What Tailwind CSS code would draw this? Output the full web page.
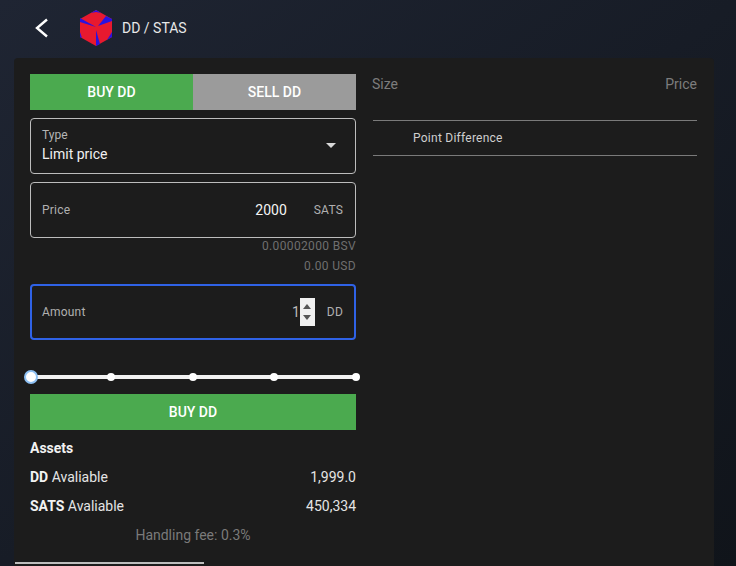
<!DOCTYPE html>
<html>
<head>
<meta charset="utf-8">
<script src="https://cdn.jsdelivr.net/npm/@tailwindcss/browser@4"></script>
</head>
<body class="m-0 h-[566px] w-[736px] overflow-hidden bg-gradient-to-br from-[#1f2533] via-[#171c26] to-[#10141a] font-['Roboto',sans-serif] text-white">
  <header class="flex h-[58px] items-center pb-[2px]">
    <svg class="ml-[34px] h-[20px] w-[16px]" viewBox="0 0 16 20" fill="none"><path d="M13 1.5 L3 10 L13 18.5" stroke="#fff" stroke-width="2.4"/></svg>
    <svg class="ml-[30px] h-[36px] w-[32px]" viewBox="0 0 32 36">
      <path d="M16 0 L32 9 V27 L16 36 L0 27 V9 Z" fill="#e8192f"/>
      <path d="M11 3 L16 0 L21 3 L16 2 Z M0 8 L16 17 L0 12 Z M26 6 L32 9 L32 11 L18 16 Z M16 20 L16 36 L20 34 Z M32 22 V27 L27 30 Z M0 22 L0 27 L2 28 Z" fill="#2a12e0"/>
    </svg>
    <span class="ml-[10px] text-[14px] leading-none text-[#e8e8e8]">DD / STAS</span>
  </header>
  <main class="ml-[14px] flex h-[508px] w-[700px] gap-[16px] rounded-t-[4px] bg-[#1c1c1c] pl-[16px] pt-[16px]">
    <section class="relative w-[326px] shrink-0">
      <div class="flex h-[36px] text-[14px] font-medium">
        <div class="flex w-[163px] items-center justify-center bg-[#4baa4f]">BUY DD</div>
        <div class="flex w-[163px] items-center justify-center bg-[#9b9b9b]">SELL DD</div>
      </div>
      <div class="mt-[8px] flex h-[56px] items-center justify-between rounded-[4px] border border-[#bdbdbd] pb-[2px] pl-[11px] pr-[19px]">
        <div>
          <div class="text-[12px] leading-[14px] text-[#b5b5b5]">Type</div>
          <div class="mt-[4px] text-[14px] leading-[16px] text-[#f0f0f0]">Limit price</div>
        </div>
        <svg class="h-[5px] w-[10px]" viewBox="0 0 10 5"><path d="M0 0 H10 L5 5 Z" fill="#d8d8d8"/></svg>
      </div>
      <div class="mt-[8px] flex h-[56px] items-center rounded-[4px] border border-[#bdbdbd] pl-[11px] pr-[12px]">
        <span class="text-[12px] tracking-[0.2px] text-[#b0b0b0]">Price</span>
        <span class="ml-auto text-[14px] text-[#f4f4f4]">2000</span>
        <span class="ml-[27px] text-[12px] tracking-[0.2px] text-[#b0b0b0]">SATS</span>
      </div>
      <div class="-mt-[2px] text-right text-[12px] leading-[20px] tracking-[0.35px] text-[#6f6f6f]">0.00002000 BSV</div>
      <div class="text-right text-[12px] leading-[20px] tracking-[0.35px] text-[#6f6f6f]">0.00 USD</div>
      <div class="mt-[8px] flex h-[56px] items-center rounded-[4px] border-2 border-[#2f62e6] pl-[10px] pr-[11px]">
        <span class="text-[12px] tracking-[0.2px] text-[#b0b0b0]">Amount</span>
        <span class="ml-auto text-[14px] text-[#bdbdbd]">1</span>
        <div class="flex h-[28px] w-[15px] flex-col items-center justify-center gap-[6px] bg-[#f0f0f0]">
          <svg class="h-[5px] w-[8px]" viewBox="0 0 8 5"><path d="M4 0 L8 5 H0 Z" fill="#555"/></svg>
          <svg class="h-[5px] w-[8px]" viewBox="0 0 8 5"><path d="M0 0 H8 L4 5 Z" fill="#555"/></svg>
        </div>
        <span class="ml-[12px] text-[12px] tracking-[0.2px] text-[#b0b0b0]">DD</span>
      </div>
      <div class="relative mt-[31px] h-[12px]">
        <div class="absolute left-0 right-0 top-[4px] h-[4px] bg-[#f2f2f2]"></div>
        <div class="absolute left-[-6px] top-[-1px] h-[14px] w-[14px] rounded-full border-2 border-[#8ec1f4] bg-white"></div>
        <div class="absolute left-[77px] top-[2px] h-[8px] w-[8px] rounded-full bg-white"></div>
        <div class="absolute left-[159px] top-[2px] h-[8px] w-[8px] rounded-full bg-white"></div>
        <div class="absolute left-[240px] top-[2px] h-[8px] w-[8px] rounded-full bg-white"></div>
        <div class="absolute left-[322px] top-[2px] h-[8px] w-[8px] rounded-full bg-white"></div>
      </div>
      <div class="mt-[11px] flex h-[36px] items-center justify-center bg-[#4baa4f] text-[14px] font-medium">BUY DD</div>
      <div class="mt-[10px] text-[14px] font-bold leading-[16px] text-[#f2f2f2]">Assets</div>
      <div class="mt-[13px] flex justify-between text-[14px] leading-[16px] text-[#e4e4e4]"><span><b class="font-bold text-[#f2f2f2]">DD</b> Avaliable</span><span>1,999.0</span></div>
      <div class="mt-[13px] flex justify-between text-[14px] leading-[16px] text-[#e4e4e4]"><span><b class="font-bold text-[#f2f2f2]">SATS</b> Avaliable</span><span>450,334</span></div>
      <div class="mt-[13px] text-center text-[14px] leading-[16px] text-[#7a7a7a]">Handling fee: 0.3%</div>
    </section>
    <section class="w-[325px] shrink-0">
      <div class="flex justify-between text-[14px] leading-[20px] text-[#7d7d7d]">
        <span>Size</span><span>Price</span>
      </div>
      <div class="mt-[26px] ml-[1px] flex h-[36px] items-center border-y border-[#7a7a7a] pl-[40px] text-[12px] tracking-[0.25px] text-[#cfcfcf]">Point Difference</div>
    </section>
  </main>
  <div class="absolute left-[15px] top-[562px] h-[2px] w-[189px] bg-[#bdbdbd]"></div>
</body>
</html>
